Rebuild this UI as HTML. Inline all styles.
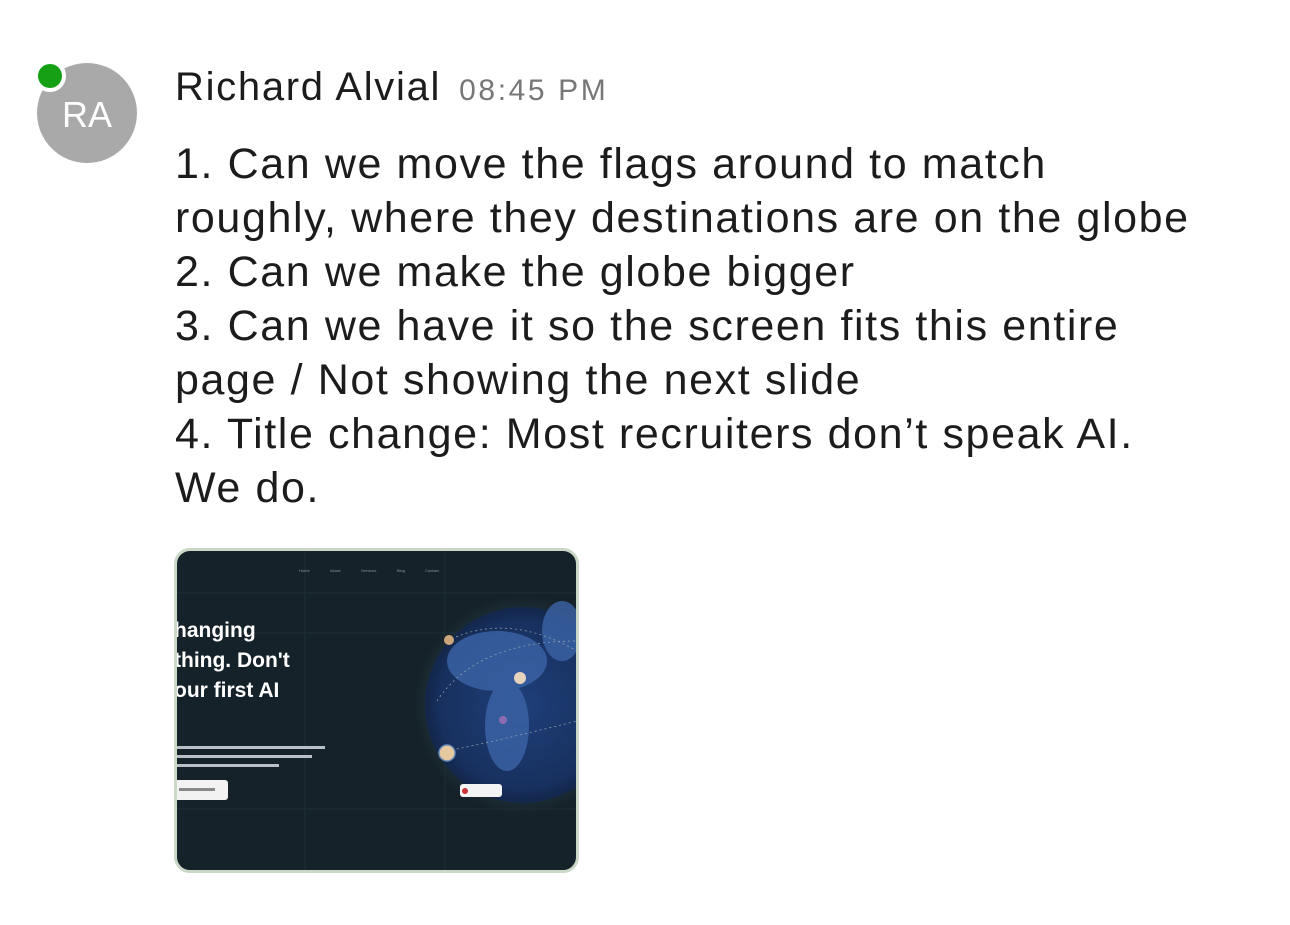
<!DOCTYPE html>
<html><head><meta charset="utf-8"><style>
html,body{margin:0;padding:0;background:#fff;width:1290px;height:925px;overflow:hidden;font-family:"Liberation Sans",sans-serif;}
.av{position:absolute;left:37px;top:63px;width:100px;height:100px;border-radius:50%;background:#a9a9a9;color:#fff;font-size:36px;text-align:center;line-height:104px;}
.dot{position:absolute;left:34px;top:60px;width:24px;height:24px;border-radius:50%;background:#15a015;border:4px solid #fff;}
.name{position:absolute;left:175px;top:65px;font-size:40px;color:#1c1c1c;white-space:nowrap;letter-spacing:1.7px;}
.name span{font-size:30px;color:#777;margin-left:18px;letter-spacing:2.6px}
.body{position:absolute;left:175px;top:137px;font-size:43px;line-height:54px;color:#1c1c1c;white-space:nowrap;letter-spacing:1.6px;}
.img{position:absolute;left:174px;top:548px;width:399px;height:319px;border:3px solid #cbd8c8;border-radius:16px;background:#16222a;overflow:hidden;}
</style></head><body>
<div class="av">RA</div><div class="dot"></div>
<div class="name">Richard Alvial<span>08:45 PM</span></div>
<div class="body">1. Can we move the flags around to match<br>roughly, where they destinations are on the globe<br>2. Can we make the globe bigger<br>3. Can we have it so the screen fits this entire<br>page / Not showing the next slide<br>4. Title change: Most recruiters don’t speak AI.<br>We do.</div>
<div class="img">
<svg width="399" height="319" viewBox="0 0 399 319">
<defs><radialGradient id="g" cx="0.5" cy="0.5" r="0.5"><stop offset="0" stop-color="#1f3f7a"/><stop offset="0.85" stop-color="#17305e"/><stop offset="1" stop-color="#13264a"/></radialGradient>
<radialGradient id="h" cx="0.5" cy="0.5" r="0.5"><stop offset="0.8" stop-color="#2b4a50" stop-opacity="0.6"/><stop offset="1" stop-color="#16222a" stop-opacity="0"/></radialGradient></defs>
<g stroke="#1f2d35" stroke-width="1"><line x1="0" y1="42" x2="399" y2="42"/><line x1="0" y1="82" x2="399" y2="82"/><line x1="0" y1="258" x2="399" y2="258"/><line x1="128" y1="0" x2="128" y2="319"/><line x1="268" y1="0" x2="268" y2="319"/></g>
<g fill="#8a949a" font-size="4"><text x="122" y="21">Home</text><text x="153" y="21">About</text><text x="184" y="21">Services</text><text x="220" y="21">Blog</text><text x="248" y="21">Contact</text></g>
<circle cx="346" cy="154" r="112" fill="url(#h)"/>
<circle cx="346" cy="154" r="98" fill="url(#g)"/>
<g fill="#3c64a8" opacity="0.8"><ellipse cx="320" cy="110" rx="50" ry="30"/><ellipse cx="330" cy="175" rx="22" ry="45"/><ellipse cx="385" cy="80" rx="20" ry="30"/></g>
<g fill="none" stroke="#9aa7b0" stroke-dasharray="2 3" stroke-width="0.7"><path d="M270 90 Q330 60 400 100"/><path d="M270 200 Q320 190 400 170"/><path d="M260 150 Q300 90 400 90"/></g>
<circle cx="272" cy="89" r="5" fill="#caa67a"/><circle cx="343" cy="127" r="6" fill="#e6d5bc"/><circle cx="326" cy="169" r="4" fill="#8c6bb0"/><circle cx="270" cy="202" r="8" fill="#e8c8a0" stroke="#6b8fb8" stroke-width="1.5"/>
<rect x="283" y="233" width="42" height="13" rx="3" fill="#f4f4f4"/><circle cx="288" cy="240" r="3" fill="#c33"/>
<g fill="#fff" font-size="21" font-weight="bold"><text x="-3" y="86">hanging</text><text x="-3" y="116">thing. Don't</text><text x="-3" y="146">our first AI</text></g>
<g fill="#b8c0c5"><rect x="0" y="195" width="148" height="3"/><rect x="0" y="204" width="135" height="3"/><rect x="0" y="213" width="102" height="3"/></g>
<rect x="-6" y="229" width="57" height="20" rx="3" fill="#f2f2f2"/><rect x="2" y="237" width="36" height="3" fill="#888"/>
</svg></div>
</body></html>
